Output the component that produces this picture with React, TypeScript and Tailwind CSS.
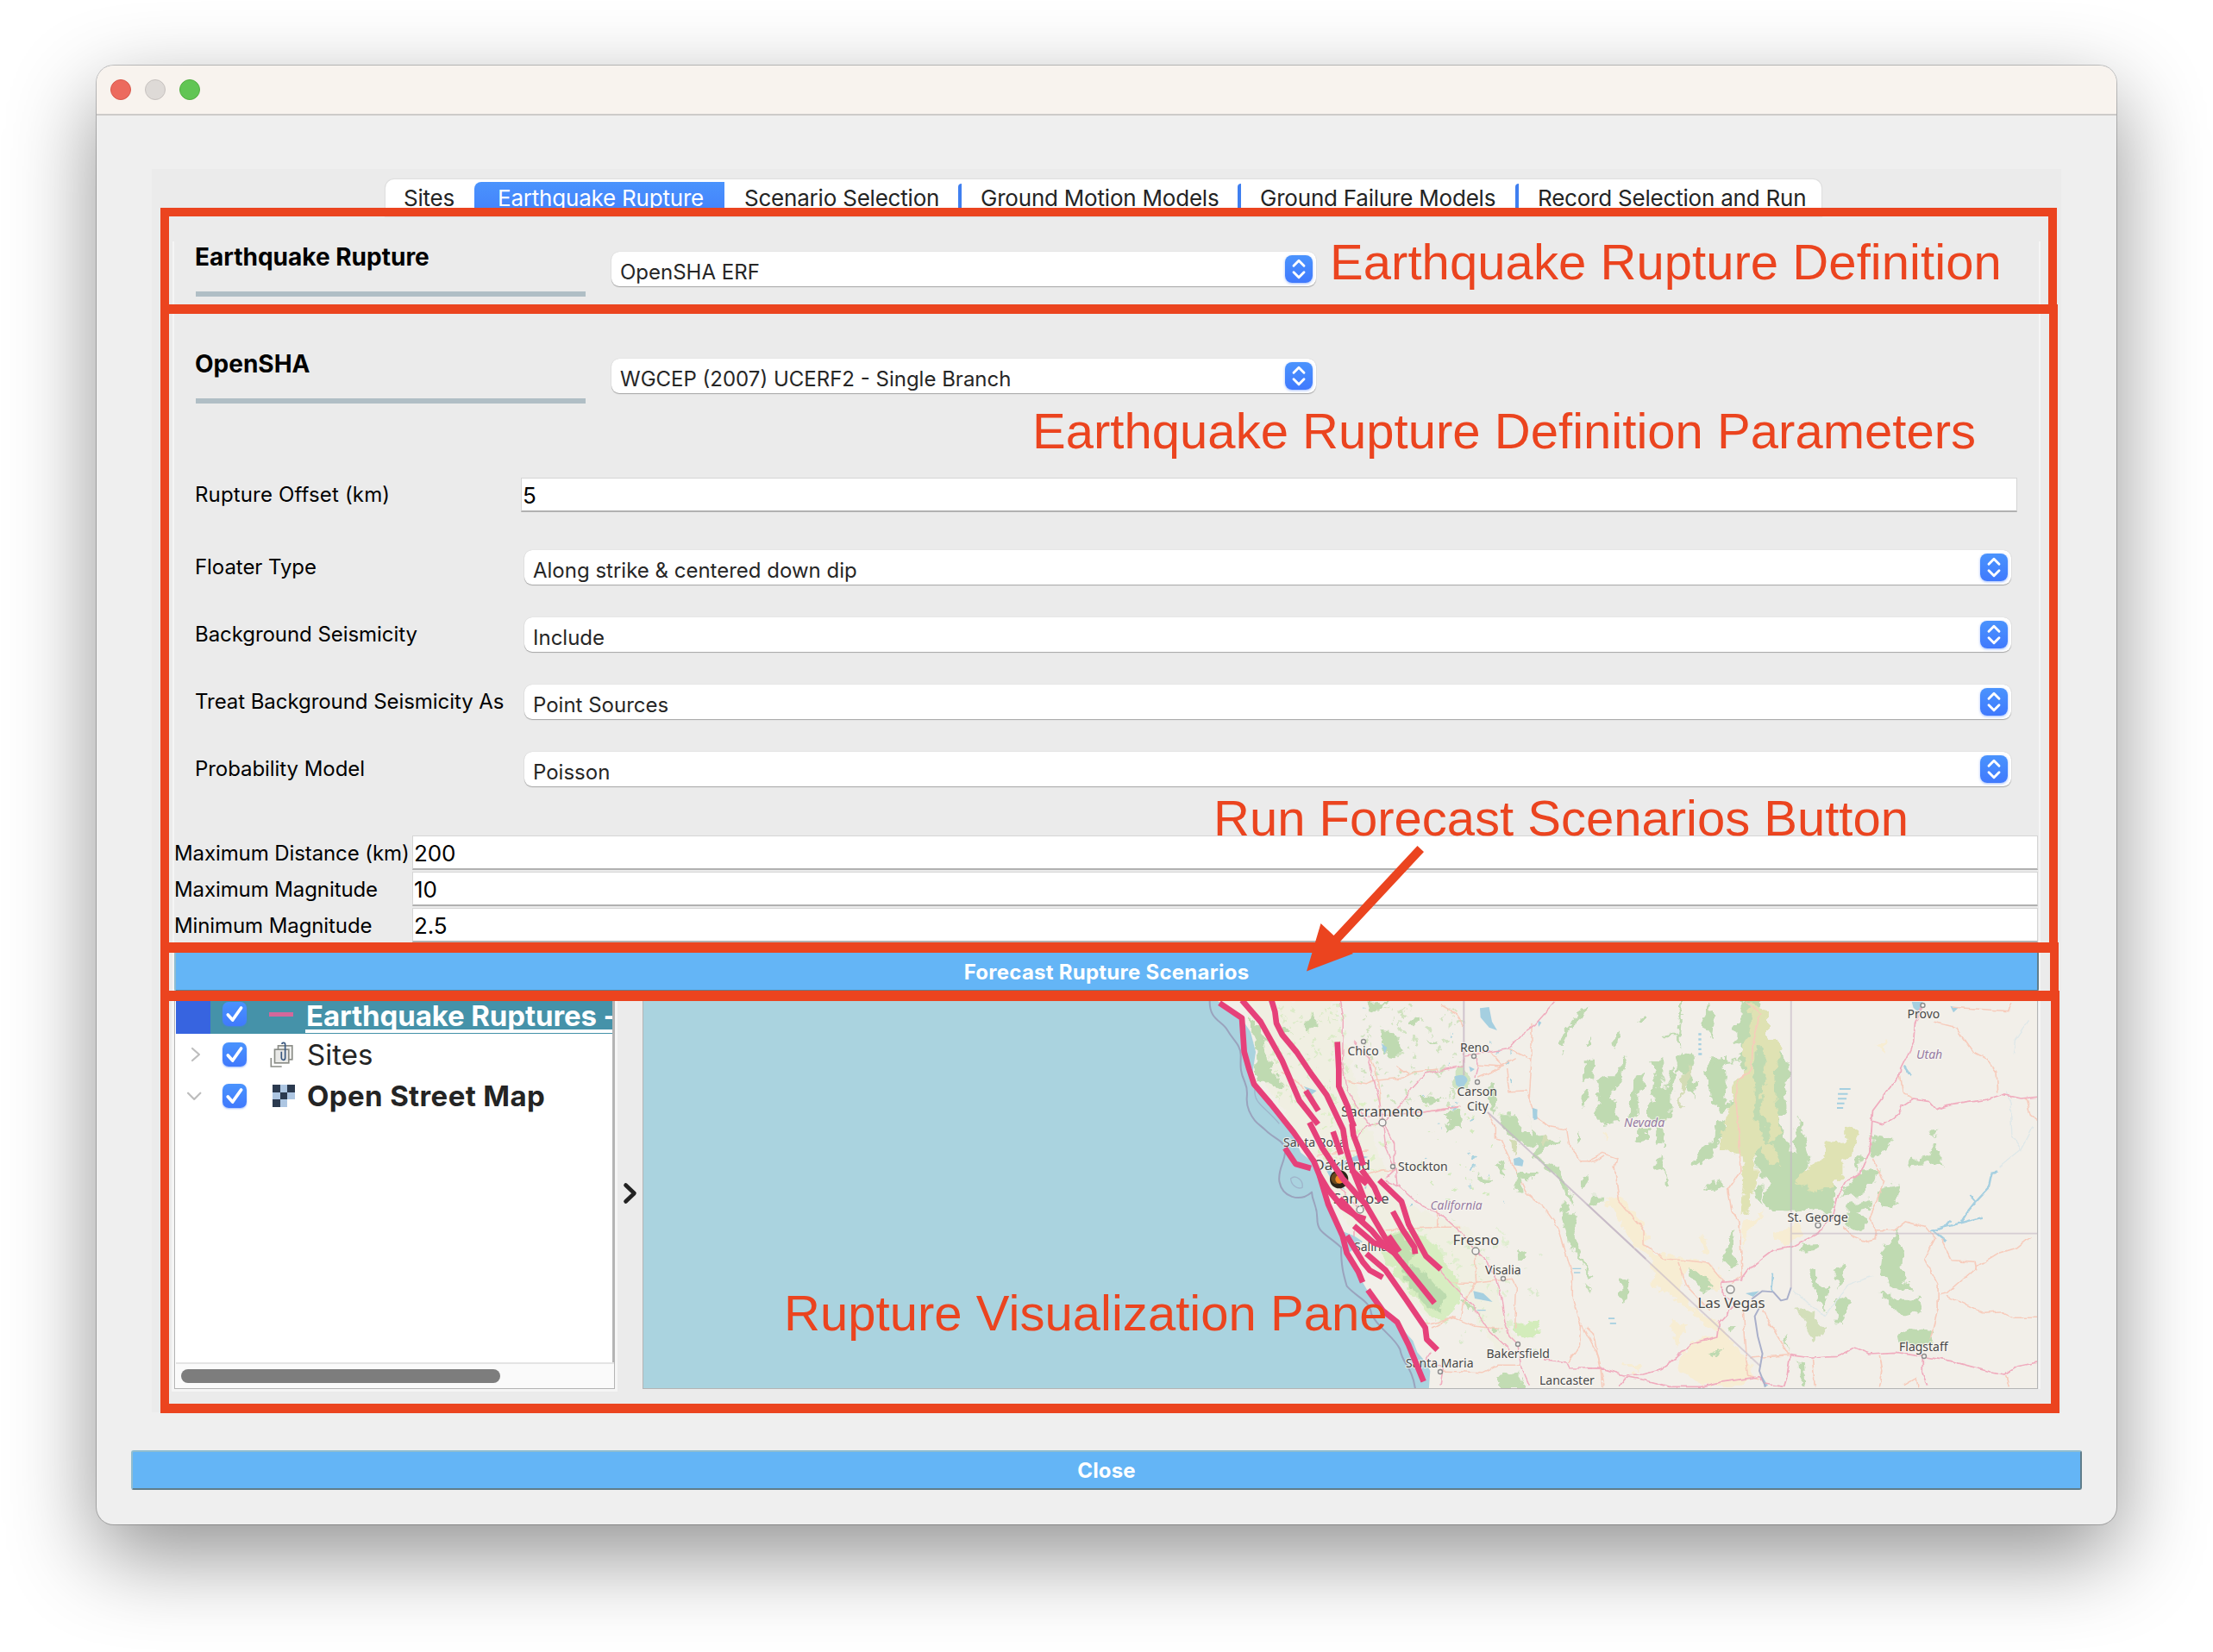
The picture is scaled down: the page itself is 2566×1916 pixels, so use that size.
import React from 'react';

const tabs = [
  { label: 'Sites', box: 'w-[103px] pl-[21px]' },
  { label: 'Earthquake Rupture', box: 'w-[290px]', active: true },
  { label: 'Scenario Selection', box: 'w-[271px] pl-[23px]' },
  { label: 'Ground Motion Models', box: 'w-[324px] pl-[26px]', divided: true },
  { label: 'Ground Failure Models', box: 'w-[322px] pl-[26px]', divided: true },
  { label: 'Record Selection and Run', box: 'w-[355px] pl-[26px]', divided: true },
];

const params = [
  { label: 'Floater Type', value: 'Along strike & centered down dip' },
  { label: 'Background Seismicity', value: 'Include' },
  { label: 'Treat Background Seismicity As', value: 'Point Sources' },
  { label: 'Probability Model', value: 'Poisson' },
];

const limits = [
  { label: 'Maximum Distance (km)', value: '200' },
  { label: 'Maximum Magnitude', value: '10' },
  { label: 'Minimum Magnitude', value: '2.5' },
];

function Tabs() {
  return (
    <div className="ml-[271px] mt-[12px] flex h-[43px] w-[1665px] rounded-t-[10px] bg-white text-[26px] leading-[44px] tracking-[-0.21px] text-[#242424] shadow-[0_0_1px_1px_rgba(0,0,0,0.06)]">
      {tabs.map((t) =>
        t.active ? (
          <div key={t.label} className={`${t.box} flex pt-[3px]`}>
            <div className="h-full w-full rounded-l-[8px] bg-linear-to-b from-[#4a93fd] to-[#4380fb] pl-[27px] leading-[38px] text-white">
              {t.label}
            </div>
          </div>
        ) : (
          <div key={t.label} className={`${t.box} relative whitespace-nowrap`}>
            {t.divided && (
              <span className="absolute left-0 top-[5px] h-[38px] w-[4px] rounded-tl-[4px] bg-[#3f7ff0]" />
            )}
            {t.label}
          </div>
        ),
      )}
    </div>
  );
}

function Stepper() {
  return (
    <span className="flex size-[32px] shrink-0 items-center justify-center rounded-[8px] bg-linear-to-b from-[#4a93fd] to-[#4079fd] shadow-[0_1px_3px_rgba(64,121,253,0.5)]">
      <svg viewBox="0 0 32 32" className="size-[32px]" fill="none" stroke="white" strokeWidth={2.9} strokeLinecap="round" strokeLinejoin="round">
        <path d="M10 12.2 L16 6.2 L22 12.2 M10 19.8 L16 25.8 L22 19.8" />
      </svg>
    </span>
  );
}

function Combo({ value, className }: { value: string; className: string }) {
  return (
    <div className={`${className} flex h-[40px] items-center justify-between rounded-[9px] bg-white pl-[10px] pr-[4px] shadow-[0_1px_1px_rgba(0,0,0,0.28),0_0_1px_rgba(0,0,0,0.2)]`}>
      <span className="pt-[7px] text-[24px] leading-[33px] text-[#262626]">{value}</span>
      <Stepper />
    </div>
  );
}

function Field({ value, className }: { value: string; className: string }) {
  return (
    <div className={`${className} h-[40px] border border-b-2 border-[#d5d5d5] border-b-[#b1b1b1] bg-white pl-px text-[26px] leading-[39px] tracking-[-0.15px] text-black`}>
      {value}
    </div>
  );
}

function Header({ title, value, className }: { title: string; value: string; className: string }) {
  return (
    <div className={`${className} flex h-[64px] pl-[27px]`}>
      <div className="w-[452px] shrink-0 border-b-[6px] border-[#b0bec5] text-[28px] font-bold leading-[37px] text-black">
        <span className="-ml-px">{title}</span>
      </div>
      <Combo value={value} className="ml-[30px] mt-[12px] w-[817px]" />
    </div>
  );
}

function Check() {
  return (
    <span className="flex size-[28px] shrink-0 rounded-[7px] bg-linear-to-b from-[#4a93fd] to-[#4079fd] shadow-[0_1px_2px_rgba(64,121,253,0.5)]">
      <svg viewBox="0 0 28 28" className="size-[28px]" fill="none" stroke="white" strokeWidth="3.7" strokeLinecap="round" strokeLinejoin="round">
        <path d="M6.3 15 L11.7 21 L21.6 7" />
      </svg>
    </span>
  );
}

function LayerTree() {
  return (
    <div className="flex h-[459px] w-[511px] shrink-0 flex-col border border-[#b4b4b4] bg-white pl-px shadow-[0_0_0_3px_#f5f5f5]">
      <div className="flex min-h-0 flex-1 flex-col overflow-hidden border-r-2 border-[#b4b4b4]">
        <div className="-mr-[2px] flex h-[46px] shrink-0 items-center bg-[#4592a9]">
          <div className="h-full w-[40px] shrink-0 bg-[#3764e0]" />
          <div className="ml-[14px] flex"><Check /></div>
          <div className="ml-[26px] h-[5px] w-[28px] shrink-0 bg-[#d4679b]" />
          <div className="ml-[14px] mt-[3px] h-[41px] w-[358px] shrink-0 whitespace-nowrap border-b-[4px] border-white pl-px text-[33px] font-bold leading-[42px] tracking-[-0.1px] text-white">
            Earthquake Ruptures -
          </div>
        </div>
        <div className="flex h-[48px] shrink-0 items-center text-[33px] leading-[48px] text-[#242424]">
          <svg viewBox="60 190 40 60" className="ml-[16px] h-[20px] w-[13.3px]" fill="none" stroke="#bdbdbd" strokeWidth="6.5" strokeLinecap="round" strokeLinejoin="round">
            <path d="M69 199 L93 220 L69 241" />
          </svg>
          <div className="ml-[24.7px] flex"><Check /></div>
          <svg viewBox="340 174 82 92" className="ml-[27.3px] h-[30.7px] w-[27.3px]" fill="none" stroke="#8b8d87" strokeWidth="5">
            <path d="M344 231 V261 H381" />
            <rect x="368.5" y="188.5" width="49" height="48" fill="#f0f0ee" />
            <rect x="356.5" y="201.5" width="49" height="47" fill="#e9e9e7" />
            <path d="M380 209 V231 Q381 238 387 238 Q393 238 393 231 V184 Q393 178 387.5 178 Q382 178 382 183" stroke="#3a587f" />
          </svg>
          <span className="ml-[15.5px]">Sites</span>
        </div>
        <div className="flex h-[48px] shrink-0 items-center text-[33px] leading-[48px] text-[#242424]">
          <svg viewBox="48 346 56 40" className="ml-[12px] h-[13.3px] w-[18.7px]" fill="none" stroke="#bdbdbd" strokeWidth="6.5" strokeLinecap="round" strokeLinejoin="round">
            <path d="M54 357 L75.5 379 L97 357" />
          </svg>
          <div className="ml-[23.3px] flex"><Check /></div>
          <svg viewBox="0 0 3 3" className="ml-[30px] size-[26px]" shapeRendering="crispEdges">
            <rect width="3" height="3" fill="#adc6e2" />
            <path d="M0 0h1v1h-1zM2 0h1v1h-1zM1 1h1v1h-1zM0 2h1v1h-1z" fill="#2b3a4f" />
            <path d="M2 2h1v1h-1z" fill="#fff" />
          </svg>
          <span className="ml-[14px] font-bold tracking-[0.38px]">Open Street Map</span>
        </div>
      </div>
      <div className="flex h-[30px] shrink-0 items-center border-t-2 border-[#e4e4e4] bg-[#fafafa] pl-[6px]">
        <div className="h-[16px] w-[370px] rounded-full bg-[#7d7d7d]" />
      </div>
    </div>
  );
}

/* Positions of the place names are in window pixels. */
const cities: [string, number, number, number][] = [
  ['Chico', 1562.5, 1223.5, 14], ['Reno', 1693, 1219.5, 14], ['Carson', 1689.5, 1270.5, 14], ['City', 1701, 1287.5, 14],
  ['Sacramento', 1555, 1295, 16.9], ['Santa Rosa', 1488, 1329.5, 14], ['Oakland', 1522.5, 1357, 16.9],
  ['Stockton', 1621, 1358, 14], ['San Jose', 1546, 1395.5, 16.5], ['Fresno', 1684.5, 1444, 16.9],
  ['Visalia', 1722, 1478, 14], ['Salinas', 1570, 1450.5, 14], ['Bakersfield', 1723.5, 1574.5, 14],
  ['Santa Maria', 1630, 1586, 14], ['Lancaster', 1785, 1606, 14], ['Provo', 2211.5, 1181, 14],
  ['St. George', 2072.5, 1416.5, 14.3], ['Las Vegas', 1968.5, 1516.5, 16.9], ['Flagstaff', 2202, 1567, 14],
];
const states: [string, number, number, number][] = [['California', 1658.5, 1403, 13.8], ['Nevada', 1883, 1306.5, 14], ['Utah', 2222, 1227.5, 14]];
const rings: [number, number, number][] = [
  [1581, 1208, 2.5], [1709, 1225, 2.5], [1713, 1255, 2.5], [1603, 1302, 4], [1615, 1353, 2.5], [1577, 1403, 4],
  [1711, 1451, 4], [1743, 1483, 2.5], [1760, 1559, 2.5], [1670, 1591, 2.5], [2229.5, 1166, 2.5], [2108, 1421, 3], [2006.5, 1495.5, 4.5], [2231, 1573, 2.5],
];

const faults = [
  '222,70 300,122 308,240 325,300 342,352 400,420 480,520 550,620 570,670 600,720 650,780 700,812 730,822',
  '300,60 365,135 440,270 500,410 565,492',
  '403,60 415,100 420,140 440,180 490,240 540,315 595,390 652,510 662,575 685,650 725,750',
  '632,205 637,300 637,360 668,430 682,480 690,500',
  '683,490 688,530 705,575 722,635',
  '522,375 566,445', '535,485 580,575 650,680 730,770 800,890 830,940 970,1114', '617,517 645,597',
  '450,575 487,630 540,645', '570,670 600,770 650,880 665,940 705,1005 720,1042',
  '778,686 855,760 880,840 940,950 992,997', '716,650 760,710 782,760',
  '825,795 860,860 900,920 903,943', '690,845 760,905 800,918 830,940', '810,880 848,935',
  '665,880 720,970 745,1000 790,1025', '733,942 800,1000 870,1100 938,1200 943,1240 980,1277',
  '738,1068 790,1140 840,1180 880,1260 932,1387', '640,750 700,815 750,860 800,920', '680,650 735,700',
];

/* Small deterministic specks of woodland and farmland. */
function specks(n: number, seed: number, x: number, y: number, w: number, h: number, size: number) {
  let s = seed;
  const rnd = () => {
    s = (s * 16807) % 2147483647;
    return s / 2147483647;
  };
  for (let i = 0; i < 5; i++) rnd();
  let d = '';
  for (let i = 0; i < n; i++) {
    const px = x + rnd() * w;
    const py = y + rnd() * h;
    const a = size * (0.3 + rnd());
    const b = size * (0.3 + rnd());
    d += `M${px.toFixed(1)} ${py.toFixed(1)}l${a.toFixed(1)} ${(-b / 2).toFixed(1)}l${(a / 2).toFixed(1)} ${b.toFixed(1)}l${(-a).toFixed(1)} ${(b / 2).toFixed(1)}z`;
  }
  return d;
}

function MapCanvas() {
  return (
    <svg viewBox="746 1153 1616 457" className="h-[457px] w-[1616px]" strokeLinejoin="round">
      <defs>
        <filter id="rough" filterUnits="userSpaceOnUse" x="-100" y="0" width="1800" height="1500">
          <feTurbulence type="fractalNoise" baseFrequency="0.03" numOctaves="3" seed="4" result="n" />
          <feDisplacementMap in="SourceGraphic" in2="n" scale="42" xChannelSelector="R" yChannelSelector="G" />
        </filter>
        <filter id="wiggle" filterUnits="userSpaceOnUse" x="-100" y="0" width="1800" height="1500">
          <feTurbulence type="fractalNoise" baseFrequency="0.03" numOctaves="2" seed="9" result="n" />
          <feDisplacementMap in="SourceGraphic" in2="n" scale="16" xChannelSelector="R" yChannelSelector="G" />
        </filter>
      </defs>
      <rect x="746" y="1152" width="1616" height="460" fill="#f2efe9" />

      {/* California */}
      <g transform="translate(1340 1140) scale(0.33333)">
        <g filter="url(#rough)">
          <path d="M480 60 L620 60 L690 330 L760 560 L850 760 L1100 860 L1250 1240 L1200 1300 L1050 1060 L960 1180 L720 950 L560 620 L360 320 L310 60Z" fill="#f0f0e0" opacity=".7" />
          <path d={specks(110, 11, 400, 80, 260, 330, 10)} fill="#d3e9be" opacity=".7" />
          <path d={specks(50, 5, 560, 400, 240, 260, 12)} fill="#d5efbb" opacity=".7" />
          <path d={specks(60, 37, 880, 850, 340, 340, 15)} fill="#dcedcb" opacity=".8" />
          <path d={specks(80, 7, 700, 80, 360, 340, 11)} fill="#c8e0b8" opacity=".8" />
          <path d={specks(34, 77, 900, 420, 300, 420, 9)} fill="#d3eabf" />
          <path d={specks(26, 91, 700, 80, 560, 700, 9)} fill="#aad3df" />
          <path d={specks(30, 19, 1000, 900, 330, 380, 10)} fill="#d3e8c4" opacity=".7" />
          <path d="M800 870 L880 860 L960 900 L1040 1020 L1060 1100 L1000 1190 L940 1140 L860 1040 L790 960Z" fill="#d7edc1" />
          <path d="M860 960 L930 1000 L1010 1090 L990 1150 L930 1110 L860 1030Z" fill="#bcdbae" />
          <path d="M810 880 L860 870 L900 940 L880 980 L830 930Z" fill="#c3dfb0" />
          <path d="M340 190 L395 250 L400 300 L438 340 L435 370 L390 345 L350 350 L345 260Z M320 110 L380 180 L390 260 L340 200Z" fill="#bfdab1" />
          <path d="M520 140 L545 108 L562 125 L555 158 L522 162Z M735 68 L810 66 L790 85 L760 100 L738 95Z M775 165 L820 168 L860 235 L835 262 L800 258 L785 200Z M890 118 L908 122 L905 142 L890 138Z M440 145 L470 165 L450 175Z" fill="#bfdab1" />
          <path d="M1000 450 L1060 440 L1062 505 L1005 515 L1030 480Z M910 395 L1000 400 L985 415 L920 418Z M940 195 L980 215 L960 215Z M1155 360 L1188 345 L1182 460 L1158 420Z" fill="#bfdab1" />
          <path d="M1040 300 q45 -35 50 20 l-15 60 l-35 -20Z" fill="#cfe3c0" />
          <path d="M1245 1180 L1335 1172 L1330 1210 L1295 1240 L1255 1225Z" fill="#d3ecbb" />
          <path d="M1190 1365 L1260 1355 L1280 1410 L1185 1410Z M1170 1190 l20 10 l-12 14z M1060 1100 l50 20 l-20 20z M1490 1045 l30 15 l-12 14z" fill="#c2dcb3" />
        </g>
        <path d="M180 20 L180 60 L215 62 L300 125 L330 170 L348 240 L335 330 L410 430 L470 510 L505 590 L548 625 L570 690 L592 770 L640 860 L690 880 L720 900 L690 925 L665 945 L725 1050 L765 1120 L850 1195 L895 1245 L910 1285 L940 1320 L955 1350 L950 1420 L-1800 1420 L-1800 20Z" fill="#aad3df" />
        <path d="M470 520 L500 560 L480 590Z M570 610 L600 640 L660 720 L620 700Z M590 650 L700 600 L740 605 L690 625Z M1040 325 Q1080 310 1085 340 L1065 370 L1045 355Z M1128 88 L1160 84 L1170 135 L1188 165 L1160 155 L1130 120Z M515 360 L560 375 L540 390Z M1105 1072 L1140 1080 L1172 1110 L1110 1098Z M1312 435 L1328 440 L1326 475 L1312 470Z M1330 130 l12 8 l-10 15z M1118 1137 h30 v4 h-30z M1450 992h30v4h-30z M1455 1006h22v4h-22z M785 210 l20 15 l-8 22z M1090 290 l20 10 l-15 10z" fill="#a5cfe0" />
        <path d="M188 30 V60 C186 130 230 130 250 165 S295 215 296 250 S290 300 310 345 S305 400 325 445 S360 490 385 515 S440 545 450 575 C455 620 425 640 430 690 C440 745 500 765 543 728 C545 765 562 770 562 820 S590 870 645 920 C645 990 655 1020 665 1055 C700 1095 745 1105 750 1150 C770 1200 830 1230 850 1275 C860 1330 890 1330 903 1412" fill="none" stroke="#9aa3bd" strokeWidth="6" />
        <path d="M470 680 C490 665 515 690 510 712 C490 720 470 700 470 680Z M345 370 C340 420 380 430 430 490" fill="none" stroke="#9fb5cb" strokeWidth="4" />

        <g fill="none" stroke="#f7cbbb" strokeWidth="4.5" filter="url(#wiggle)">
          <path d="M665 340 L730 350 L760 340 L860 330 L900 310 L980 300 M740 250 L765 300 L780 390 L780 480 M990 75 L1050 110 L1070 150 M1115 285 L1200 290 L1250 260 M1165 240 L1210 290 L1120 330 M1230 230 L1305 265 M1308 140 L1308 260 L1300 400 M1220 300 L1230 380 L1290 378 L1325 470 L1370 500 L1430 510 L1440 570 L1480 620 L1530 620 L1560 600 M1155 450 L1180 500 L1180 540 L1200 545 L1245 640 L1290 730 L1350 780 L1400 850 L1430 950 L1450 1020 L1450 1100 L1480 1190 L1478 1260 L1435 1320 M700 680 L790 650 L830 655 M800 860 L980 850 L1060 850 M980 790 L980 850 M1020 1045 L1110 1045 L1240 1030 L1255 1060 L1250 1200 M940 1190 L1040 1165 L1110 1195 L1210 1205 M1110 930 L1115 1045 L1070 1110 L1060 1170 M960 1200 L1000 1180 L1040 1160 M990 1350 L1140 1355 L1190 1330 L1270 1330 M440 310 L500 345 L520 380 M880 460 L960 445 L1060 430 M560 600 L630 590 L740 585 M840 290 L880 320 M1478 1180 L1540 1300 L1560 1400" />
        </g>
        <g fill="none" stroke="#f0acbe" strokeWidth="4.5" filter="url(#wiggle)">
          <path d="M640 60 L652 130 L650 280 L660 350 L700 430 L745 495 M690 200 L740 260 L780 420 L790 480 L800 570 L835 650 L840 700 L930 780 L985 800 L1060 865 L1110 930 L1150 970 L1185 1030 L1200 1080 L1215 1180 L1230 1230 L1260 1260 L1270 1330 L1300 1400 M790 480 L830 560 L832 650 L800 680 M700 540 L735 495 L790 487 L850 430 L890 370 L940 315 L1010 300 L1070 288 L1070 230 M1075 255 L1120 250 L1160 240 L1225 230 L1270 180 L1320 145 L1390 65 M1115 250 L1120 290 L1110 330 M735 465 L930 450 L1060 430 M850 710 L800 690 M980 990 L1040 1060 L1100 1120 L1160 1210 L1230 1275 M1350 1310 L1430 1320 L1440 1340 L1560 1342 M960 1280 L940 1310 L1000 1340 L990 1400 M690 850 L690 880 M620 690 L680 760 L720 790" />
        </g>
      </g>

      {/* central Nevada and the Sierra */}
      <g transform="translate(1600 1160) scale(0.33333)">
        <g filter="url(#rough)">
          <path d="M700 25 L718 28 L716 50 L670 90 L650 120 L635 160 L625 150 L640 105 L680 65Z M708 152 L735 130 L735 150 L712 160Z M710 208 L748 206 L745 260 L712 290Z M705 320 L725 318 L712 378 L702 370Z M755 280 L780 265 L815 265 L850 200 L862 210 L835 290 L800 330 L828 370 L825 425 L780 432 L752 400 L765 350Z M810 130 L835 110 L830 145 L815 165Z M885 260 L915 245 L918 300 L898 330 L900 400 L880 415 L865 400Z M945 220 L985 208 L985 260 L970 310 L1000 300 L1020 230 L1035 245 L1015 310 L1008 410 L985 430 L930 410 L930 370 L955 330 L962 270Z M895 450 h38 v35 q-20 20 -40 0Z M955 445 L985 450 L990 505 L965 500Z M1045 10 h8 L1045 110 L1048 170 L1030 130 L980 130 L985 122 L1035 122Z M1025 195 L1060 180 L1095 200 L1080 260 L1105 290 L1090 335 L1065 310 L1070 260 L1035 240Z M980 540 L985 580 L1005 640 L995 642 L985 600 L955 580Z M895 75 L930 45 L930 60 L900 85Z M675 475 L695 460 L690 485 L675 490Z M690 640 L730 605 L718 635 L695 650Z M1150 200 L1200 195 V390 L1155 350 L1135 260Z M1120 80 L1145 10 L1160 80 L1150 140Z M1170 420 L1200 415 V470 L1150 540 L1080 590 L1085 565 L1130 510 L1165 490Z M1130 655 L1180 630 L1190 650 L1150 660Z M640 180 l-12 15 l2 -20z" fill="#bfdab1" />
          <path d="M405 400 L480 400 L485 450 L530 480 L515 370 L525 440 L570 480 L640 490 L570 515 L550 545 L620 580 L650 640 L675 690 L670 710 L640 660 L600 600 L570 570 L535 550 L540 510 L490 495 L440 460Z M640 700 L660 720 L640 750 L680 740 L680 830 L700 900 L740 960 L730 970 L690 900 L655 850 L645 790 L630 740Z M735 680 L775 680 L765 715 L730 715Z M475 600 L550 600 L545 625 L490 620 L500 670 L470 675Z M480 870 L510 880 L505 900 L485 900Z M400 580 l35 -20 l-10 50z M340 610 l50 10 l-30 25z" fill="#c0dbb2" />
          <path d="M450 490 L485 495 L480 535 L455 525Z M560 475 L580 478 L575 505 L558 500Z M1040 270 L1085 230 L1080 280 L1055 310 L1055 375 L1040 378 L1048 320Z" fill="#d3dcb5" />
        </g>
        <path d="M530 375 l15 8 l3 30 l-12 5z M465 552 L485 546 L500 558 L496 578 L467 574Z M1108 115h10v7h-10z M1108 133h10v7h-10z M1108 150h10v7h-10z M1108 167h10v7h-10z M1108 184h12v7h-12z" fill="#a5cfe0" />
        <path d="M292 -20 V262 M375 390 L925 900" fill="none" stroke="#c3b5c4" strokeWidth="6" opacity=".75" />
      </g>

      {/* eastern Nevada, Utah and Arizona */}
      <g transform="translate(1840 1140) scale(0.35714 0.33333)">
        <g filter="url(#rough)">
          <path d="M500 60 L560 60 L590 200 L650 260 L655 320 L640 350 L650 450 L620 460 L640 540 L670 590 L680 465 L690 470 L730 610 L700 650 L740 690 L800 680 L810 760 L790 800 L730 790 L590 785 L575 745 L600 690 L560 670 L545 590 L520 640 L515 540 L480 420 L440 450 L400 390 L390 320 L410 265 L480 270 L520 230 L480 200 L480 160 L500 130Z" fill="#bfdab1" />
          <path d="M440 280 L500 270 L515 320 L480 340 L490 400 L450 410Z M525 430 L545 470 L530 540 L510 540Z" fill="#f2efe9" />
          <path d="M530 66 L585 90 L585 180 L635 225 L610 300 L615 400 L625 520 L600 560 L628 640 L590 630 L570 570 L545 600 L555 690 L530 740 L528 800 L500 800 L510 690 L500 600 L430 580 L450 460 L480 400 L475 350 L520 300 L510 220 L535 140Z" fill="#dfe2b3" />
          <path d="M548 220 L572 220 L578 320 L560 430 L590 500 L600 560 L570 540 L545 480 L545 330Z" fill="#bfdab1" />
          <path d="M835 498 L880 510 L870 590 L830 620 L830 670 L790 710 L740 730 L680 690 L700 650 L770 610 L775 555 L835 550Z" fill="#dfe2b3" />
          <path d="M925 530 L990 545 L960 600 L925 605Z M895 650 L945 640 L935 690 L900 730 L830 740 L850 700Z M955 710 L1015 700 L1000 790 L955 785Z M850 770 L930 750 L920 790 L880 800 L915 840 L880 860 L840 840Z M1045 645 L1055 610 L1110 600 L1120 560 L1155 575 L1155 635 L1100 620Z M1112 515 L1145 512 L1130 540Z M870 610 L895 610 L870 650Z M1015 855 L1025 920 L1020 990 L1050 1070 L990 1060 L950 1000 L960 920Z M945 1070 L1010 1105 L1080 1100 L1090 1130 L1050 1165 L1000 1140Z M720 990 L745 1000 L745 1040 L780 1060 L770 1145 L740 1080Z M800 1000 L830 985 L840 1030 L820 1055Z M810 1090 L850 1100 L830 1195 L808 1190Z M1005 1230 L1040 1205 L1120 1215 L1110 1260 L1010 1255Z M690 1310 L705 1315 L710 1405 L695 1400Z M475 855 L482 960 L465 1000 L440 970Z M110 1035 L135 1030 L135 1090 L120 1115 L110 1090Z M640 1210 L658 1240 L655 1280Z M695 910 L750 905 L740 930 L700 935Z M385 715 L410 690 L440 705 L420 720Z M460 1190 l12 8 l-6 20z M540 720 L570 700 L570 770 L545 750Z" fill="#bfdab1" />
          <path d="M670 1140 L715 1130 L780 1210 L735 1245 L705 1170Z" fill="#d3dfba" />
          <path d="M60 760 L110 740 L180 830 L200 930 L290 960 L380 970 L440 1020 L430 1070 L370 1050 L330 990 L300 1080 L350 1130 L440 1200 L480 1260 L530 1310 L540 1370 L500 1400 L380 1400 L290 1340 L340 1250 L420 1220 L300 1110 L215 1050 L210 970 L120 860Z M270 1180 L320 1190 L290 1270Z M610 870 L690 830 L700 880 L640 915Z M575 790 L520 880 L515 930 L500 850Z M375 870 L395 930 L370 940Z M945 225 l25 -25 l-5 40z M55 520 l18 5 l-10 20z M120 1320 l60 10 l-20 30z" fill="#f7edd3" />
          <path d="M330 990 L380 1015 L415 1050 L385 1085 L345 1040Z M390 1290 l55 -20 l-30 30z" fill="#bfdab1" />
        </g>
        <path d="M1055 66 h35 v20 l-10 20 l-20 -20Z M820 366h36v6h-36z M815 383h32v6h-32z M815 400h28v6h-28z M812 416h24v6h-24z M812 432h20v6h-20z M1180 80 l25 8 l-15 15z M70 1165 h20 v5 h-20z M75 1182 h20 v5 h-20z M570 1370 l18 30 l-12 8z M515 1080 l45 -8 l-20 20z" fill="#a5cfe0" />
        <g fill="none" filter="url(#wiggle)">
          <path d="M1115 865 L1160 850 L1215 835 L1240 790 L1262 760 L1245 740 M1262 760 L1305 710 L1315 660 L1335 655 M1215 835 L1285 815 M1125 865 L1165 900 M1160 850 l20 -25 M600 1075 L605 1010 M1030 290 L1052 325" stroke="#a5cfe0" strokeWidth="7" />
          <path d="M1410 580 L1380 530 L1375 420 L1365 380 M1410 580 L1450 500 M1410 580 L1340 640 M1435 130 L1390 200 L1385 250 M670 1070 L770 1160 L850 1050 L930 1020" stroke="#dfe8e9" strokeWidth="4" />
          <path stroke="#f7cbbb" strokeWidth="4.5" d="M520 66 L565 110 L540 180 L535 300 L490 340 L485 420 L495 540 L498 660 L458 720 L470 790 L495 830 L505 1020 L470 1045 M0 620 L50 592 L98 610 L90 640 L105 760 L185 860 L185 910 L250 960 L320 965 L395 975 L445 1040 M295 970 L320 1050 L400 1140 M570 1140 L655 1295 L530 1305 M505 1140 L515 1290 L525 1365 L560 1380 M1125 135 L1200 155 L1255 240 L1300 265 L1330 310 L1335 380 M1190 85 L1370 98 L1380 70 M1018 320 L1025 380 L1060 405 M930 610 L965 690 L940 760 L915 820 L940 860 L935 890 L900 900 L860 880 L830 850 M940 860 L1000 860 L1035 830 L1100 850 L1130 890 L1095 960 L1140 1050 L1140 1130 L1115 1240 M1150 890 L1185 965 L1260 970 L1265 1000 M1145 1085 L1170 1080 L1265 990 L1340 940 L1400 920 L1440 885 M1170 1090 L1230 1120 L1290 1150 L1350 1145 L1390 1165 L1470 1165 M1425 400 L1440 460 L1465 480 M950 1295 L960 1350 L950 1405 M732 1305 L740 1405 M1030 1400 L1070 1375 L1075 1405 M1360 1365 L1370 1405 M0 1200 L20 1220 L45 1340 L50 1405" />
          <path stroke="#f0acbe" strokeWidth="5" d="M1090 80 L1065 140 L1060 210 L1018 300 L1015 325 L980 370 L928 445 L925 500 L918 590 L890 660 L840 690 L815 740 L800 810 L750 870 L660 920 L605 930 L530 990 L500 1035 L440 1042 L440 1080 L480 1120 L430 1180 L425 1230 L340 1255 L290 1305 L240 1345 L180 1362 L120 1365 L50 1342 L0 1340 M130 1370 L180 1380 L270 1405 L370 1405 L430 1390 L560 1370 L575 1395 L640 1405 L650 1370 L660 1295 L730 1305 L810 1300 L870 1270 L920 1290 L1000 1285 L1090 1300 L1180 1315 L1300 1350 L1355 1362 L1395 1335 L1475 1318 M1090 1300 L1090 1360 L1105 1400 M925 480 L965 492 L1000 470 L1020 430 L1060 402 L1110 410 L1135 440 L1180 425 L1300 405 L1350 388 L1410 402 L1470 396 M130 1370 L105 1405" />
        </g>
        <g fill="none" stroke="#c3b5c4" strokeWidth="5.5">
          <path d="M663 20 V1060 M663 872 H1465 M0 770 L565 1335" opacity=".6" />
          <path d="M663 1060 L650 1100 L630 1105 L605 1075 L570 1072 L535 1100 M560 1130 L545 1160 L555 1230 L570 1290 L560 1350 L580 1405" stroke="#a9afca" />
        </g>
      </g>

      <g fill="#f5f3f0" stroke="#8c8c8c" strokeWidth="1.4">
        {rings.map(([x, y, r]) => <circle key={`${x}-${y}`} cx={x} cy={y} r={r} />)}
      </g>
      <g fontFamily="'Noto Sans', sans-serif" stroke="#f8f6f2" strokeOpacity=".75" strokeWidth="2.5" paintOrder="stroke">
        {cities.map(([name, x, y, size]) => <text key={name} x={x} y={y} fontSize={size} fill="#484848">{name}</text>)}
        {states.map(([name, x, y, size]) => <text key={name} x={x} y={y} fontSize={size} fontStyle="italic" fill="#967ba3">{name}</text>)}
      </g>

      <g transform="translate(1340 1140) scale(0.33333)">
        <circle cx="638" cy="683" r="32" fill="#2c2418" />
        <circle cx="630" cy="680" r="20" fill="#6b4a1e" />
        <circle cx="640" cy="683" r="15" fill="#f08a28" />
        <g fill="none" stroke="#e6417a" strokeWidth="20">
          {faults.map((p) => <polyline key={p} points={p} />)}
        </g>
      </g>
    </svg>
  );
}

const note = 'absolute whitespace-nowrap font-["Liberation_Sans",sans-serif] text-[58px] leading-[58px] text-[#eb441f]';

function Annotations() {
  return (
    <>
      <div className="absolute left-[186px] top-[241px] h-[123px] w-[2199px] border-[10px] border-b-[11px] border-[#eb441f]" />
      <div className="absolute left-[186px] top-[353px] h-[752px] w-[2200px] border-x-[10px] border-y-[11px] border-[#eb441f]" />
      <div className="absolute left-[186px] top-[1093px] h-[68px] w-[2201px] border-x-[10px] border-y-[12px] border-[#eb441f]" />
      <div className="absolute left-[186px] top-[1149px] h-[490px] w-[2202px] border-x-[10px] border-y-[12px] border-b-[11px] border-[#eb441f]" />
      <div className={`${note} left-[1542px] top-[275px] tracking-[0.06px]`}>Earthquake Rupture Definition</div>
      <div className={`${note} left-[1197px] top-[471px] tracking-[0.03px]`}>Earthquake Rupture Definition Parameters</div>
      <div className={`${note} left-[1407px] top-[920px]`}>Run Forecast Scenarios Button</div>
      <div className={`${note} left-[909px] top-[1494px] tracking-[0.04px]`}>Rupture Visualization Pane</div>
      <svg viewBox="1500 970 160 160" className="absolute left-[1500px] top-[970px] size-[160px]">
        <path d="M1643.5 981 L1651 988 L1554 1092 L1569 1106 L1515 1126.5 L1531.5 1071 L1546.5 1085Z" fill="#eb441f" />
      </svg>
    </>
  );
}

export default function App() {
  return (
    <div className="relative h-[1916px] w-[2566px] overflow-hidden bg-white pl-[112px] pt-[76px] font-[Inter,sans-serif]">
      <div className="flex h-[1692px] w-[2342px] flex-col overflow-hidden rounded-[20px] bg-[#efefef] shadow-[0_0_0_1px_rgba(0,0,0,0.22),0_36px_100px_rgba(0,0,0,0.43)]">
        <div className="flex h-[58px] shrink-0 items-center gap-[16px] border-b-2 border-[#cdcbc9] bg-[#f8f3ee] pl-[16px]">
          <span className="size-[24px] rounded-full border border-[#d8584b] bg-[#ec6a5e]" />
          <span className="size-[24px] rounded-full border border-[#c6c1be] bg-[#dedad7]" />
          <span className="size-[24px] rounded-full border border-[#52ae41] bg-[#61c554]" />
        </div>

        <div className="ml-[64px] mt-[62px] h-[1442px] w-[2214px] shrink-0 overflow-hidden bg-[#ebebeb]">
          <Tabs />
          <div className="ml-[24px] w-[2166px] border-x-2 border-[#f5f5f5]">
            <Header title="Earthquake Rupture" value="OpenSHA ERF" className="-ml-[2px] mt-[29px]" />
            <Header title="OpenSHA" value="WGCEP (2007) UCERF2 - Single Branch" className="-ml-[2px] mt-[60px]" />

            <div className="ml-[24px] mt-[86px] text-[24px] text-black">
              <div className="flex h-[40px] items-center">
                <span className="w-[378px] tracking-[0.15px]">Rupture Offset (km)</span>
                <Field value="5" className="w-[1735px]" />
              </div>
              <div className="mt-[44px] flex flex-col gap-[38px]">
                {params.map((p) => (
                  <div key={p.label} className="flex h-[40px] items-center">
                    <span className="w-[382px] tracking-[-0.06px]">{p.label}</span>
                    <Combo value={p.value} className="w-[1724px]" />
                  </div>
                ))}
              </div>
            </div>

            <div className="mt-[57px] flex flex-col gap-[2px] text-[24px] text-black">
              {limits.map((l) => (
                <div key={l.label} className="flex h-[40px] items-center">
                  <span className="w-[276px] whitespace-nowrap pt-[2px] tracking-[-0.1px]">{l.label}</span>
                  <Field value={l.value} className="w-[1885px]" />
                </div>
              ))}
            </div>

            <button className="mt-[10px] block h-[47px] w-[2162px] rounded-[3px] border-2 border-[#8fbdd0] border-b-[#607d8b] border-r-[#607d8b] bg-[#64b5f6] text-[24px] font-bold leading-[45px] tracking-[0.25px] text-white">
              Forecast Rupture Scenarios
            </button>

            <div className="mt-[2px] flex">
              <LayerTree />
              <div className="flex w-[32px] shrink-0 items-center justify-center">
                <svg viewBox="0 0 20 28" className="ml-[3px] mt-[4px] h-[28px] w-[20px]" fill="none" stroke="#222" strokeWidth="4.6" strokeLinecap="round" strokeLinejoin="round">
                  <path d="M4.5 4.5 L14.5 14 L4.5 23.5" />
                </svg>
              </div>
              <div className="h-[459px] w-[1618px] shrink-0 border border-[#b4b4b4]">
                <MapCanvas />
              </div>
            </div>
          </div>
        </div>

        <button className="ml-[40px] mt-[44px] h-[46px] w-[2262px] shrink-0 rounded-[3px] border-2 border-[#8fbdd0] border-b-[#607d8b] border-r-[#607d8b] bg-[#64b5f6] pt-px text-[24px] font-bold leading-[42px] tracking-[0.15px] text-white">
          Close
        </button>
      </div>
      <Annotations />
    </div>
  );
}
